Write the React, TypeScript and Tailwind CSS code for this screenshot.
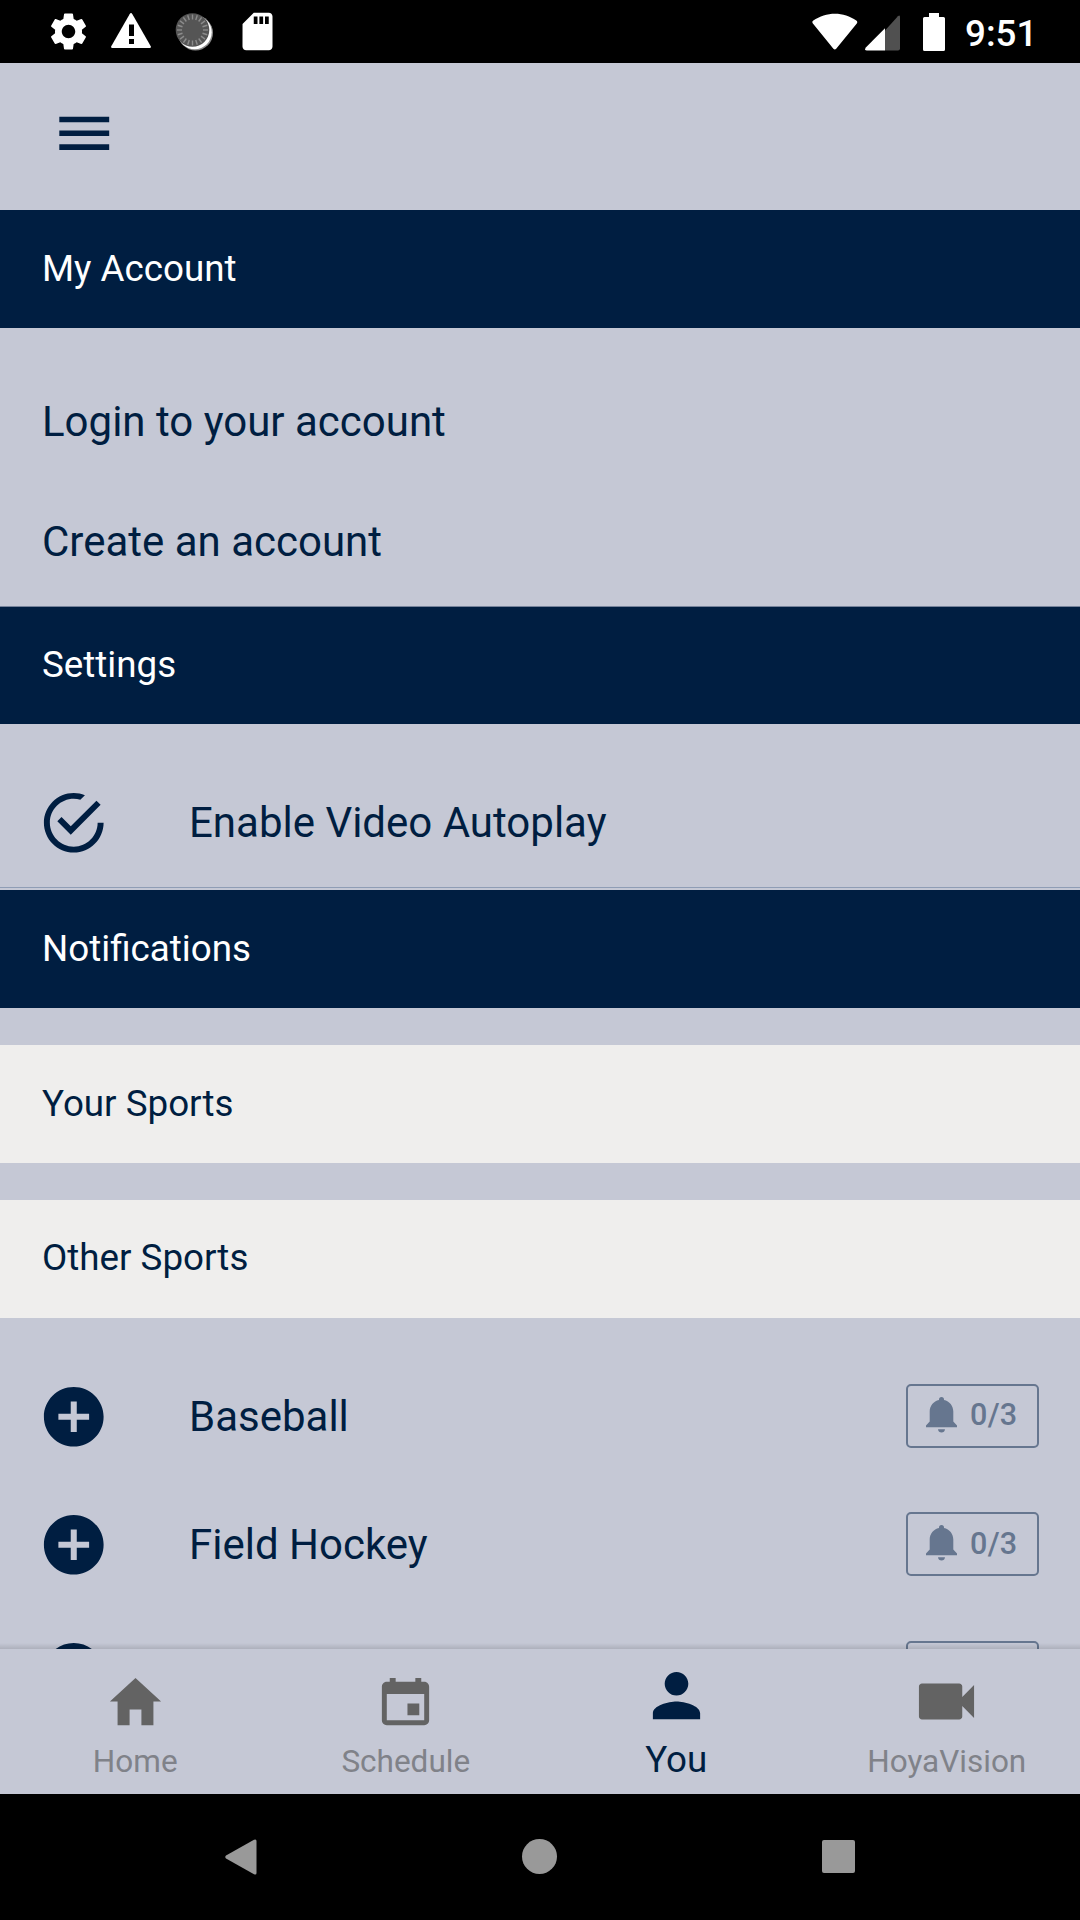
import {
  IoMdAddCircle,
  IoMdCalendar,
  IoMdCheckmarkCircleOutline,
  IoMdHome,
  IoMdMenu,
  IoMdPerson,
  IoMdVideocam
} from 'react-icons/io';
import { MdSdCard, MdSettings } from 'react-icons/md';

const otherSports = [
  { id: 1, name: 'Baseball', count: '0/3' },
  { id: 2, name: 'Field Hockey', count: '0/3' },
  { id: 3, name: '', count: '' },
];

const ticks = Array.from({ length: 20 }, (_, i) => i * 18);

function StatusBar() {
  return (
    <div className="h-[63px] shrink-0 bg-black text-white flex items-center justify-between pl-[46px] pr-[46px]">
      <div className="flex items-center">
        <MdSettings size={45} />
        <svg width="40" height="36" viewBox="0 0 40 36" className="ml-5 -mt-0.5">
          <path fill="white" d="M18.6 1.2Q20 -1 21.4 1.2L39.6 33Q40.6 35 38.6 35H1.4Q-.6 35 .4 33Z" />
          <path fill="black" d="M18 11.5h5v11.500h-5zM18 26h5v5h-5z" />
        </svg>
        <svg width="40" height="40" viewBox="0 0 40 40" className="ml-[23px] mt-px">
          <circle cx="21.5" cy="21" r="17.5" fill="#8a8a8a" />
          <circle cx="20.7" cy="20.2" r="17" fill="white" />
          <circle cx="18.5" cy="18" r="16.800" fill="#555" />
          {ticks.map(a => (
            <path key={a} d="M18.5 2.5v5" stroke="#8c8c8c" strokeWidth="1.4" transform={`rotate(${a} 18.5 18)`} />
          ))}
        </svg>
        <MdSdCard size={45} className="ml-[21px]" />
      </div>

      <div className="flex items-center">
        <svg width="46" height="38" viewBox="0 0 46 38">
          <path fill="white" d="M.7 10.2Q-.3 8.6 1.3 7.6C14-1.7 32-1.7 44.3 7.6Q46 8.8 44.8 10.4L24.2 35.8Q22.8 37.4 21.4 35.8Z" />
        </svg>
        <svg width="36" height="36" viewBox="0 0 36 36" className="ml-[7px] mt-0.5">
          <path fill="#505050" d="M20 15.5L32.9 1.2Q35 -.7 35 2V33.5Q35 35.5 33 35.5H20Z" />
          <path fill="white" d="M20 13.3V35.5H2Q-1 35.2 .8 32.5Z" />
        </svg>
        <svg width="22" height="38" viewBox="0 0 22 38" className="ml-[22px]">
          <path fill="white" d="M6 0h10v4h4.5Q22 4 22 5.500V36.500Q22 38 20.500 38H1.500Q0 38 0 36.500V5.500Q0 4 1.500 4H6Z" />
        </svg>
        <span className="ml-5 w-[69px] text-[36.75px] font-medium leading-none mt-[5px]">9:51</span>
      </div>
    </div>
  );
}

function SectionHeader({ title, className }: { title: string; className: string }) {
  return <div className={`shrink-0 flex items-center px-[42px] text-[36.75px] ${className}`}>{title}</div>;
}

function BellIcon() {
  return (
    <svg width="31" height="36" viewBox="0 0 31 36" fill="currentColor">
      <path d="M13 3V2.500Q13 0 15.500 0T18 2.500V3C23.500 4.200 27.300 8.700 27.300 14.500V24.500L31 28.500V30.200H0V28.500L3.700 24.500V14.500C3.700 8.700 7.500 4.200 13 3Z" />
      <path d="M12 32.200H19Q18.500 35.500 15.500 35.500T12 32.200Z" />
    </svg>
  );
}

function SportRow({ name, count }: { name: string; count: string }) {
  return (
    <div className="h-[128.3px] shrink-0 flex items-center pl-[37px] pr-[41px]">
      <IoMdAddCircle size={73.5} />
      <span className="ml-[78.5px] flex-1">{name}</span>
      <div className="w-[133px] h-[64px] -mt-px flex items-center border-2 border-[#66768f] rounded-[5px] text-[#66768f] pl-[18px] pb-[2px]">
        <BellIcon />
        <span className="ml-[13px] text-[30.5px] font-medium tracking-[0.3px]">{count}</span>
      </div>
    </div>
  );
}

function TabBar() {
  return (
    <nav className="w-[1082px] h-[145px] shrink-0 grid grid-cols-4 bg-[#c5c8d5] text-[31.5px] text-[#808289] relative">
      <div className="absolute inset-x-0 -top-[6px] h-[6px] bg-linear-to-b from-black/0 to-black/12" />
      <a className="flex flex-col items-center">
        <IoMdHome size={63} className="mt-[21px] text-[#636363]" />
        <span className="mt-[10px] leading-[37px]">Home</span>
      </a>
      <a className="flex flex-col items-center">
        <IoMdCalendar size={63} className="mt-[21px] text-[#636363]" />
        <span className="mt-[10px] leading-[37px]">Schedule</span>
      </a>
      <a className="flex flex-col items-center text-[#001e41]">
        <IoMdPerson size={63} className="mt-[15px]" />
        <span className="mt-[11px] text-[36.75px] leading-[43px]">You</span>
      </a>
      <a className="flex flex-col items-center">
        <IoMdVideocam size={63} className="mt-[21px] text-[#636363]" />
        <span className="mt-[10px] leading-[37px]">HoyaVision</span>
      </a>
    </nav>
  );
}

export default function App() {
  return (
    <div className="w-[1080px] h-[1920px] flex flex-col overflow-hidden bg-[#c5c8d5] text-[#001e41] text-[42px] font-[Roboto,sans-serif]">
      <StatusBar />

      <header className="h-[147px] shrink-0 flex items-center pl-[51px] pb-[7px]">
        <IoMdMenu size={66.5} />
      </header>

      <main className="flex-1 min-h-0 flex flex-col overflow-hidden">
        <SectionHeader title="My Account" className="h-[118px] bg-[#001e41] text-white" />
        <div className="h-[279px] shrink-0 px-[42px] pt-[33px] border-b border-[#76839b]">
          <div className="h-[120px] flex items-center">Login to your account</div>
          <div className="h-[120px] flex items-center">Create an account</div>
        </div>

        <SectionHeader title="Settings" className="h-[117px] pb-px bg-[#001e41] text-white" />
        <div className="h-[164px] shrink-0 pt-[34px] pl-[37px] mb-[2px] flex items-center border-b border-[#8f9db5]">
          <IoMdCheckmarkCircleOutline size={73.5} />
          <span className="ml-[78.5px]">Enable Video Autoplay</span>
        </div>

        <SectionHeader title="Notifications" className="h-[118px] bg-[#001e41] text-white" />
        <SectionHeader title="Your Sports" className="mt-[37px] h-[118px] bg-[#efeeed]" />
        <SectionHeader title="Other Sports" className="mt-[36.5px] h-[118px] pb-[2px] bg-[#efeeed]" />

        <div className="pt-[35px] flex flex-col">
          {otherSports.map(s => (
            <SportRow key={s.id} name={s.name} count={s.count} />
          ))}
        </div>
      </main>

      <TabBar />

      {/* Android navigation */}
      <div className="h-[126px] shrink-0 bg-black flex items-center justify-between px-[225px] pb-px">
        <svg width="32" height="36" viewBox="0 0 32 36">
          <path fill="#999" d="M1 16.500L29 .8Q31.500 -.3 31.500 2V34Q31.500 36.300 29 35.200L1 19.500Q-.5 18 1 16.500Z" />
        </svg>
        <div className="size-[35px] rounded-full bg-[#999]" />
        <div className="size-[33px] rounded-[2px] bg-[#999]" />
      </div>
    </div>
  );
}
